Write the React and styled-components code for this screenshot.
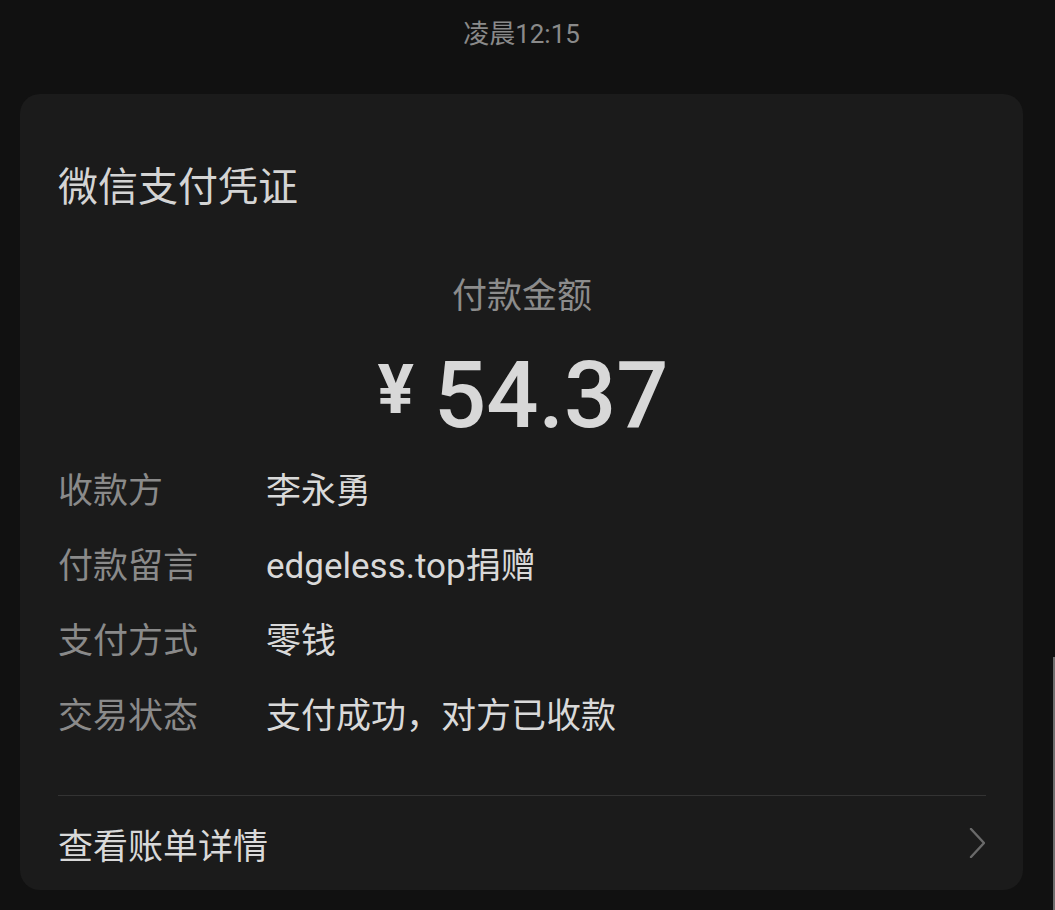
import React from "react";
import styled, { createGlobalStyle } from "styled-components";

const GlobalStyle = createGlobalStyle`
  html, body {
    margin: 0;
    padding: 0;
    background: #111111;
  }
  body {
    font-family: Roboto, "Noto Sans CJK SC", "Noto Sans", sans-serif;
    -webkit-font-smoothing: antialiased;
  }
`;

const details = [
  { label: "收款方", value: "李永勇" },
  { label: "付款留言", value: "edgeless.top捐赠" },
  { label: "支付方式", value: "零钱" },
  { label: "交易状态", value: "支付成功，对方已收款" },
];

const App = () => {
  return (
    <Page>
      <GlobalStyle />
      <TimeBar>凌晨12:15</TimeBar>
      <Card>
        <Title>微信支付凭证</Title>
        <AmountLabel>付款金额</AmountLabel>
        <Amount>
          <Currency>¥</Currency>
          <Digits>54.37</Digits>
        </Amount>
        <DetailList>
          {details.map((d) => (
            <DetailRow key={d.label}>
              <Label>{d.label}</Label>
              <Value>{d.value}</Value>
            </DetailRow>
          ))}
        </DetailList>
        <Divider />
        <Footer>
          <FooterText>查看账单详情</FooterText>
          <Chevron width="16" height="30" viewBox="0 0 16 30">
            <polyline
              points="2,1 15,15 2,29"
              fill="none"
              stroke="#6a6a6a"
              strokeWidth="2.4"
              strokeLinecap="round"
              strokeLinejoin="round"
            />
          </Chevron>
        </Footer>
      </Card>
      <ScrollThumb />
    </Page>
  );
};

const Page = styled.div`
  width: 1055px;
  height: 910px;
  overflow: hidden;
  display: flex;
  flex-direction: column;
`;

const TimeBar = styled.div`
  height: 68px;
  line-height: 68px;
  text-align: center;
  font-size: 26px;
  color: #8a8a8a;
  margin-right: 12px;
  margin-bottom: 26px;
`;

const Card = styled.div`
  margin: 0 32px 0 20px;
  background: #1b1b1b;
  border-radius: 20px;
  padding: 70px 37px 0 38px;
  display: flex;
  flex-direction: column;
`;

const Title = styled.div`
  font-size: 40px;
  line-height: 48px;
  color: #d4d4d4;
`;

const AmountLabel = styled.div`
  margin-top: 61px;
  font-size: 35px;
  line-height: 48px;
  text-align: center;
  color: #8c8c8c;
`;

const Amount = styled.div`
  margin-top: 29px;
  height: 92px;
  display: flex;
  justify-content: center;
  align-items: baseline;
  color: #d8d8d8;
  gap: 20px;
  margin-left: 2px;
`;

const Currency = styled.span`
  font-family: Roboto, sans-serif;
  font-size: 68px;
  font-weight: 700;
  line-height: 92px;
  position: relative;
  top: -14px;
`;

const Digits = styled.span`
  font-family: Roboto, sans-serif;
  font-size: 92px;
  font-weight: 500;
  line-height: 92px;
`;

const DetailList = styled.div`
  margin-top: 12px;
  display: flex;
  flex-direction: column;
`;

const DetailRow = styled.div`
  display: grid;
  grid-template-columns: 208px 1fr;
  height: 75px;
  line-height: 75px;
  font-size: 35px;
`;

const Label = styled.span`
  color: #8a8a8a;
`;

const Value = styled.span`
  color: #d9d9d9;
`;

const Divider = styled.div`
  margin-top: 41px;
  height: 1px;
  background: #333333;
`;

const Footer = styled.div`
  height: 94px;
  display: flex;
  align-items: center;
  justify-content: space-between;
`;

const FooterText = styled.span`
  font-size: 35px;
  color: #d9d9d9;
`;

const Chevron = styled.svg`
  display: block;
  margin-right: 1px;
`;

const ScrollThumb = styled.div`
  position: fixed;
  right: 0;
  top: 657px;
  width: 2px;
  height: 253px;
  background: #6e6e6e;
`;

export default App;
